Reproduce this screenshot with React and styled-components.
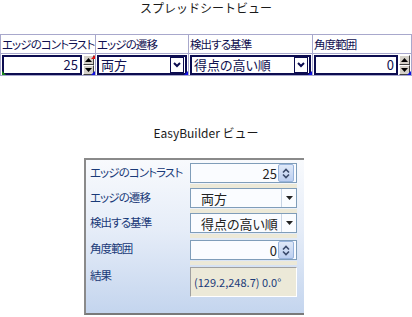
import React from "react";
import styled, { createGlobalStyle } from "styled-components";

const Global = createGlobalStyle`
  html, body { margin: 0; padding: 0; background: #fff; }
  body {
    font-family: "Noto Sans CJK JP", "Liberation Sans", sans-serif;
    font-feature-settings: "palt";
  }
`;

const Page = styled.div`
  width: 412px;
  height: 317px;
  display: flex;
  flex-direction: column;
  overflow: hidden;
`;

const Title = styled.div`
  text-align: center;
  font-size: 12px;
  line-height: 14px;
  color: #1a1a1a;
  font-feature-settings: normal;
  margin-top: ${(p) => p.$top}px;
`;

const Sheet = styled.div`
  margin-top: 19px;
  display: grid;
  grid-template-columns: 96px 93px 124px 99px;
  grid-template-rows: 19px 21px;
  border-top: 1px solid #a8a8cc;
  border-bottom: 1px solid #a8a8cc;
`;

const HeadCell = styled.div`
  border-right: 1px solid #a8a8cc;
  border-bottom: 1px solid #a8a8cc;
  font-size: 11.5px;
  line-height: 18px;
  letter-spacing: -0.9px;
  color: #101050;
  padding-left: 1px;
  white-space: nowrap;
  overflow: hidden;
  &:first-child { border-left: 1px solid #a8a8cc; }
`;

const DataCell = styled.div`
  border-right: 1px solid #a8a8cc;
  display: flex;
  align-items: stretch;
  padding: 1px 1px 0 1px;
  position: relative;
  &:nth-child(5) { border-left: 1px solid #a8a8cc; }
`;

const NavyBox = styled.div`
  flex: 1;
  border: 2px solid #0c0c50;
  background: #fff;
  display: flex;
  align-items: center;
  justify-content: ${(p) => (p.$right ? "flex-end" : "flex-start")};
  font-size: 13px;
  color: #101050;
  padding: 0 2px;
  line-height: 16px;
  min-width: 0;
`;

const SpinCol = styled.div`
  width: 11px;
  display: flex;
  flex-direction: column;
  margin-left: 1px;
`;

const SpinBtn = styled.div`
  flex: 1;
  background: #d4d0c8;
  border-top: 1px solid #fff;
  border-left: 1px solid #fff;
  border-right: 1px solid #404040;
  border-bottom: 1px solid #404040;
  display: flex;
  align-items: center;
  justify-content: center;
`;

const Corner = styled.div`
  position: absolute;
  width: 0;
  height: 0;
  border-style: solid;
  ${(p) => p.$pos}
`;

const DropBtn = styled.div`
  width: 12px;
  align-self: stretch;
  margin: 0 -1px 0 4px;
  border: 1px solid #0c0c50;
  background: #fff;
  display: flex;
  align-items: center;
  justify-content: center;
`;

const Panel = styled.div`
  margin: 18px 0 0 84px;
  width: 220px;
  height: 157px;
  box-sizing: border-box;
  border-top: 2px solid #8a8a8a;
  border-left: 2px solid #8a8a8a;
  border-bottom: 2px solid #7a7a7a;
  background: linear-gradient(#f8fafd, #e6edf8 45%, #c4d5ee);
  padding: 3px 0 0 4px;
  display: flex;
  flex-direction: column;
`;

const Row = styled.div`
  display: flex;
  height: ${(p) => p.$h || 25}px;
`;

const Label = styled.div`
  width: 100px;
  font-size: 11.5px;
  letter-spacing: -0.9px;
  color: #1a3a78;
  padding-top: ${(p) => p.$pt || 2}px;
  line-height: 16px;
  white-space: nowrap;
`;

const FieldWrap = styled.div`
  width: 107px;
  display: flex;
  flex-direction: column;
`;

const Field = styled.div`
  height: 20px;
  box-sizing: border-box;
  border: 1px solid #7f9db9;
  background: #fafcff;
  display: flex;
  align-items: center;
  font-size: 12px;
  color: #111;
`;

const Strip = styled.div`
  height: 4px;
  margin-top: 1px;
  background: #ece9d8;
`;

const FieldText = styled.div`
  flex: 1;
  text-align: ${(p) => (p.$right ? "right" : "left")};
  padding: ${(p) => (p.$right ? "0 1px 0 0" : "0 0 0 10px")};
  color: #222;
  font-size: 13px;
`;

const BlueSpin = styled.div`
  width: 14px;
  height: 16px;
  margin-right: 2px;
  border: 1px solid #98b4dc;
  border-radius: 2px;
  background: linear-gradient(#dfe9f8, #bccff0);
  display: flex;
  align-items: center;
  justify-content: center;
`;

const ArrowPart = styled.div`
  width: 14px;
  align-self: stretch;
  border-left: 1px solid #c8d4e4;
  display: flex;
  align-items: center;
  justify-content: center;
`;

const Result = styled.div`
  width: 107px;
  height: 30px;
  margin-top: 2px;
  box-sizing: border-box;
  background: #ece9d8;
  border-top: 1px solid #a0a0a0;
  border-left: 1px solid #a0a0a0;
  border-right: 1px solid #fff;
  border-bottom: 1px solid #fff;
  font-size: 11px;
  color: #1a3a78;
  display: flex;
  align-items: center;
  padding-left: 3px;
`;

const UpTri = () => (
  <svg width="7" height="4" viewBox="0 0 7 4"><path d="M0 4 L3.5 0 L7 4Z" fill="#000" /></svg>
);
const DownTri = () => (
  <svg width="7" height="4" viewBox="0 0 7 4"><path d="M0 0 L3.5 4 L7 0Z" fill="#000" /></svg>
);
const Chevron = () => (
  <svg width="8" height="6" viewBox="0 0 8 6"><path d="M1 1 L4 4 L7 1" stroke="#0c0c50" strokeWidth="2" fill="none" /></svg>
);
const SmallDown = () => (
  <svg width="7" height="4" viewBox="0 0 7 4"><path d="M0 0 L7 0 L3.5 4Z" fill="#222" /></svg>
);
const UpDown = () => (
  <svg width="8" height="11" viewBox="0 0 8 11">
    <path d="M1 4.5 L4 1.5 L7 4.5" stroke="#3a4a6a" strokeWidth="1.6" fill="none" />
    <path d="M1 6.5 L4 9.5 L7 6.5" stroke="#3a4a6a" strokeWidth="1.6" fill="none" />
  </svg>
);

const SheetSpin = () => (
  <SpinCol>
    <SpinBtn><UpTri /></SpinBtn>
    <SpinBtn><DownTri /></SpinBtn>
  </SpinCol>
);

const BlueCorner = () => (
  <Corner $pos="right: 0; bottom: 0; border-width: 0 0 4px 4px; border-color: transparent transparent #1010e0 transparent;" />
);

export default function App() {
  return (
    <Page>
      <Global />
      <Title $top={1}>スプレッドシートビュー</Title>
      <Sheet>
        <HeadCell>エッジのコントラスト</HeadCell>
        <HeadCell>エッジの遷移</HeadCell>
        <HeadCell>検出する基準</HeadCell>
        <HeadCell>角度範囲</HeadCell>
        <DataCell>
          <NavyBox $right>25</NavyBox>
          <SheetSpin />
          <Corner $pos="left: 1px; bottom: 0; border-width: 4px 0 0 4px; border-color: transparent transparent transparent #1a8a1a;" />
          <Corner $pos="right: 0; top: 1px; border-width: 0 4px 4px 0; border-color: transparent #e01010 transparent transparent; transform: rotate(90deg);" />
          <BlueCorner />
        </DataCell>
        <DataCell>
          <NavyBox>
            <span style={{ flex: 1 }}>両方</span>
            <DropBtn><Chevron /></DropBtn>
          </NavyBox>
          <BlueCorner />
        </DataCell>
        <DataCell>
          <NavyBox>
            <span style={{ flex: 1 }}>得点の高い順</span>
            <DropBtn><Chevron /></DropBtn>
          </NavyBox>
          <BlueCorner />
        </DataCell>
        <DataCell>
          <NavyBox $right>0</NavyBox>
          <SheetSpin />
          <BlueCorner />
        </DataCell>
      </Sheet>
      <Title $top={50}>EasyBuilder ビュー</Title>
      <Panel>
        <Row>
          <Label $pt={1}>エッジのコントラスト</Label>
          <FieldWrap>
            <Field>
              <FieldText $right>25</FieldText>
              <BlueSpin><UpDown /></BlueSpin>
            </Field>
            <Strip />
          </FieldWrap>
        </Row>
        <Row>
          <Label $pt={1}>エッジの遷移</Label>
          <FieldWrap>
            <Field>
              <FieldText>両方</FieldText>
              <ArrowPart><SmallDown /></ArrowPart>
            </Field>
            <Strip />
          </FieldWrap>
        </Row>
        <Row>
          <Label $pt={1}>検出する基準</Label>
          <FieldWrap>
            <Field>
              <FieldText>得点の高い順</FieldText>
              <ArrowPart><SmallDown /></ArrowPart>
            </Field>
            <Strip />
          </FieldWrap>
        </Row>
        <Row $h={27}>
          <Label $pt={2}>角度範囲</Label>
          <FieldWrap>
            <Field style={{ marginTop: 2 }}>
              <FieldText $right>0</FieldText>
              <BlueSpin><UpDown /></BlueSpin>
            </Field>
            <Strip />
          </FieldWrap>
        </Row>
        <Row $h={40}>
          <Label $pt={0}>結果</Label>
          <Result>(129.2,248.7) 0.0°</Result>
        </Row>
      </Panel>
    </Page>
  );
}
